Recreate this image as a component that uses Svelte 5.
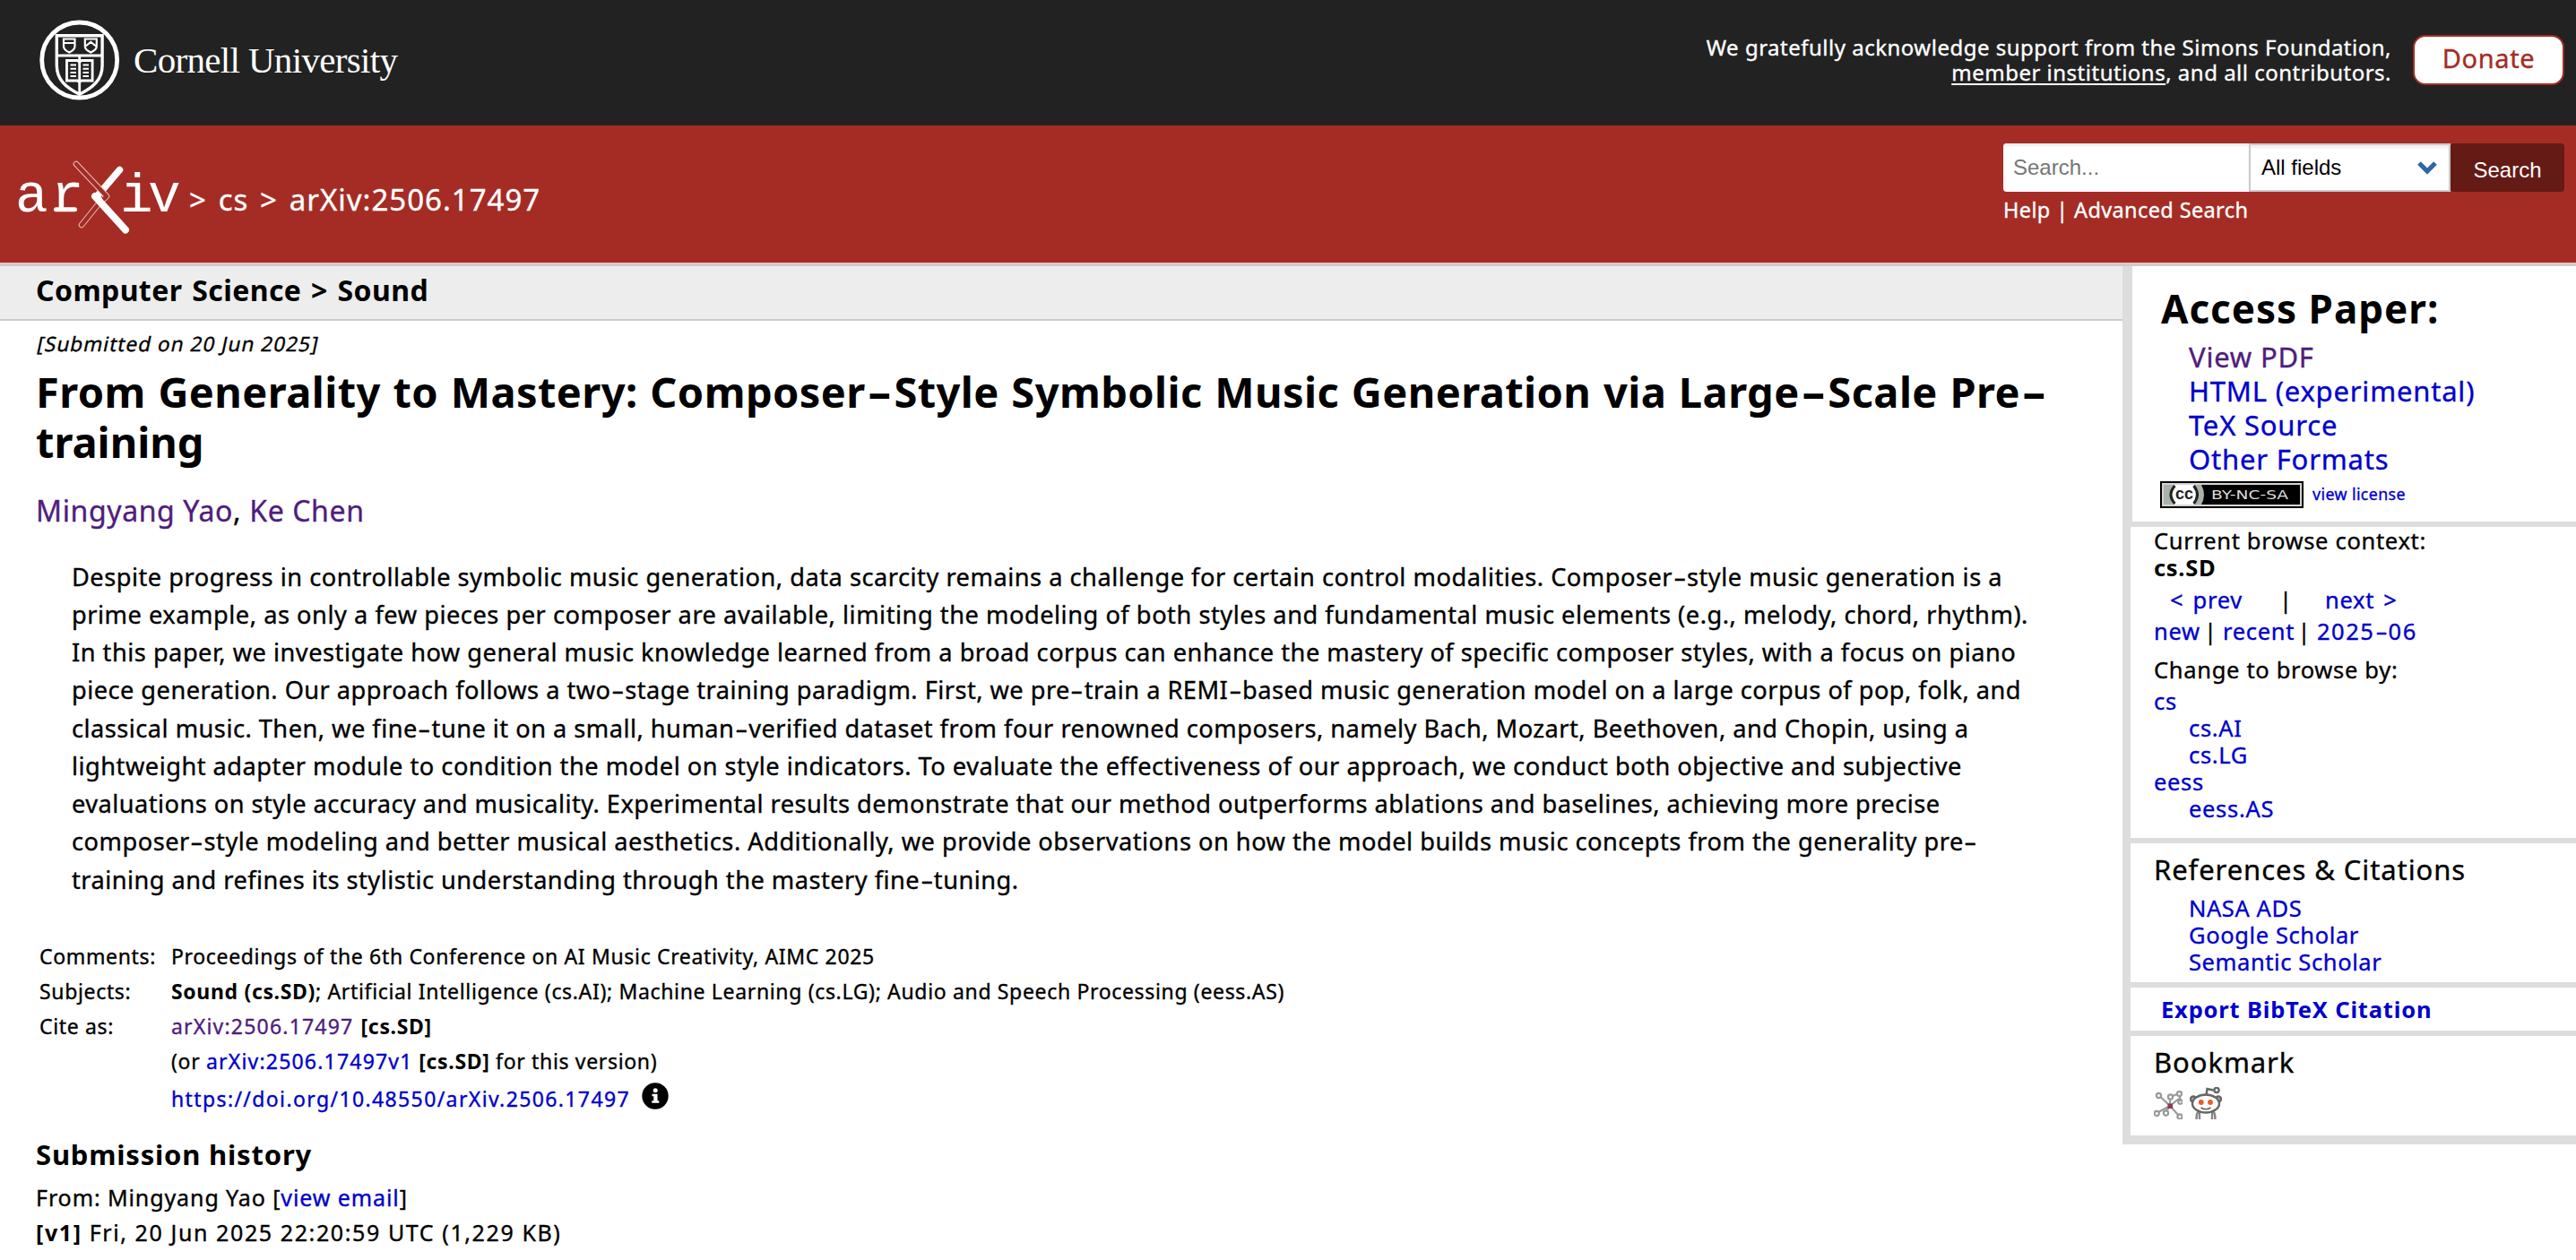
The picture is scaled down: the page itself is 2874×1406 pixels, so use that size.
<script>
  const abstractLines = [
    'Despite progress in controllable symbolic music generation, data scarcity remains a challenge for certain control modalities. Composer-style music generation is a',
    'prime example, as only a few pieces per composer are available, limiting the modeling of both styles and fundamental music elements (e.g., melody, chord, rhythm).',
    'In this paper, we investigate how general music knowledge learned from a broad corpus can enhance the mastery of specific composer styles, with a focus on piano',
    'piece generation. Our approach follows a two-stage training paradigm. First, we pre-train a REMI-based music generation model on a large corpus of pop, folk, and',
    'classical music. Then, we fine-tune it on a small, human-verified dataset from four renowned composers, namely Bach, Mozart, Beethoven, and Chopin, using a',
    'lightweight adapter module to condition the model on style indicators. To evaluate the effectiveness of our approach, we conduct both objective and subjective',
    'evaluations on style accuracy and musicality. Experimental results demonstrate that our method outperforms ablations and baselines, achieving more precise',
    'composer-style modeling and better musical aesthetics. Additionally, we provide observations on how the model builds music concepts from the generality pre-',
    'training and refines its stylistic understanding through the mastery fine-tuning.'
  ];
  const title = 'From Generality to Mastery: Composer-Style Symbolic Music Generation via Large-Scale Pre-';
  const formats = ['HTML (experimental)', 'TeX Source', 'Other Formats'];
  const references = ['NASA ADS', 'Google Scholar', 'Semantic Scholar'];
</script>

<!-- Sets hyphens wider than the font's own glyph -->
{#snippet wide(text)}{#each text.split('-') as part, i}{#if i > 0}<span class="hy">-</span>{/if}{part}{/each}{/snippet}

<div class="page">
  <header class="top">
    <svg class="cornell" width="440" height="100" viewBox="40 20 440 100" role="img" aria-label="Cornell University">
      <g fill="none" stroke="#fff">
        <circle cx="88.7" cy="67" r="42" stroke-width="4.8" />
        <path d="M63.3 39.8h50.8v33c0 16-10 25-25.4 32.4C73.3 97.8 63.3 88.8 63.3 72.8z" stroke-width="3.4" />
        <path d="M63 62h51.5M88.7 62v43" stroke-width="2.8" />
        <path d="M71 43.5h12.5v8c0 3.5-3 5.5-6.2 7-3.2-1.5-6.3-3.5-6.3-7zM71 48h12.5M94.8 43.5h13v8c0 3.5-3.2 5.5-6.5 7-3.3-1.5-6.5-3.5-6.5-7zM95.5 51.5l5.8-4.5 5.8 4.5" stroke-width="2.2" />
        <path d="M74.5 67.5h11.8l2.4 1.5 2.4-1.5h12v22.5h-12l-2.4 1.5-2.4-1.5h-11.8z" stroke-width="2.8" />
        <path d="M78.5 72.5h6.5M78.5 76.8h6.5M78.5 81h6.5M78.5 85h6.5M92.5 72.5h6.5M92.5 76.8h6.5M92.5 81h6.5M92.5 85h6.5" stroke-width="2" />
      </g>
      <text x="149" y="80.5" font-size="41" textLength="295" fill="#fff">Cornell University</text>
    </svg>
    <div class="support">
      <p class="ack">We gratefully acknowledge support from the Simons Foundation,<br /><u>member institutions</u>, and all contributors.</p>
      <button class="donate">Donate</button>
    </div>
  </header>

  <div class="banner">
    <svg class="arxiv" width="192" height="96" viewBox="10 172 192 96" role="img" aria-label="arXiv">
      <g fill="#fff">
        <text x="17" y="236" font-size="61">a</text>
        <text x="57" y="236" font-size="61">r</text>
        <text x="134" y="236" font-size="61">i</text>
        <text x="165" y="236" font-size="61">v</text>
      </g>
      <path d="M62.5 233.7h21" stroke="#fff" stroke-width="5" stroke-linecap="round" />
      <g fill="none" stroke-linecap="round" stroke-linejoin="round">
        <path d="M91 251L112 225" stroke="#e9c9c6" stroke-width="6.5" />
        <path d="M91 251L112 225" stroke="#a42c25" stroke-width="4.7" />
        <path d="M133.5 189.5L110 217" stroke="#fff" stroke-width="7.5" />
        <path d="M85 183L119 219l-3 3" stroke="#e9c9c6" stroke-width="6.5" />
        <path d="M85 183L119 219l-3 3" stroke="#a42c25" stroke-width="4.7" />
        <path d="M106 219L140 256.5" stroke="#fff" stroke-width="8" />
      </g>
    </svg>
    <div class="crumb">&gt; cs &gt; <span class="num">arXiv:2506.17497</span></div>
    <div class="search">
      <div class="fields">
        <div class="input">Search...</div>
        <div class="select">
          <span>All fields</span>
          <svg width="24" height="16" viewBox="0 0 24 16"><path d="M3 3l9 9 9-9" fill="none" stroke="#2f66a8" stroke-width="5.2" /></svg>
        </div>
        <div class="go">Search</div>
      </div>
      <div class="help">Help | Advanced Search</div>
    </div>
  </div>

  <div class="body">
    <main>
      <div class="subject">Computer Science &gt; Sound</div>
      <div class="content">
        <div class="dateline"><span>[Submitted on 20 Jun 2025]</span></div>
        <h1>{@render wide(title)}<br /><span class="tail">training</span></h1>
        <div class="authors"><a class="seen">Mingyang Yao</a>, <a class="seen">Ke Chen</a></div>
        <div class="abstract">
          {#each abstractLines as line}<div>{@render wide(line)}</div>{/each}
        </div>
        <div class="meta">
          <span>Comments:</span>
          <span>Proceedings of the 6th Conference on AI Music Creativity, AIMC 2025</span>
          <span>Subjects:</span>
          <span><b>Sound (cs.SD)</b>; Artificial Intelligence (cs.AI); Machine Learning (cs.LG); Audio and Speech Processing (eess.AS)</span>
          <span>Cite as:</span>
          <span class="id"><a class="seen num">arXiv:2506.17497</a> <b>[cs.SD]</b></span>
          <span></span>
          <span>(or <a class="num">arXiv:2506.17497v1</a> <b>[cs.SD]</b> for this version)</span>
          <span></span>
          <span class="doi">
            <a>https://doi.org/10.48550/arXiv.2506.17497</a>
            <svg width="30" height="30" viewBox="0 0 30 30"><circle cx="15" cy="15" r="14.7" /><circle cx="15.2" cy="8.8" r="2.5" fill="#fff" /><path d="M11.5 12.8h6v7.5h1.8v2.5h-8v-2.5h2v-5h-1.8z" fill="#fff" /></svg>
          </span>
        </div>
        <h2>Submission history</h2>
        <div class="history">
          <div>From: Mingyang Yao [<a>view email</a>]</div>
          <div class="version"><b>[v1]</b> Fri, 20 Jun 2025 22:20:59 UTC (1,229 KB)</div>
        </div>
      </div>
    </main>

    <aside>
      <section class="access">
        <h2>Access Paper:</h2>
        <ul>
          <li><a class="seen">View PDF</a></li>
          {#each formats as f}<li><a>{f}</a></li>{/each}
        </ul>
        <div class="license">
          <svg width="160" height="30" viewBox="0 0 160 30">
            <rect width="160" height="30" fill="#000" />
            <rect x="3" y="3" width="154" height="24" fill="#000" stroke="#d4d4d4" stroke-width="2" />
            <path d="M4 4h42q6 11 0 22H4z" fill="#aab2ab" />
            <path d="M16 4h22q8 11 0 22H16q-9-11 0-22z" fill="#fff" />
            <path d="M16.5 5q-9 10 0 20M37.5 5q8 10 0 20" fill="none" stroke="#222" stroke-width="3" />
            <text class="cc" x="17" y="20" font-size="18" textLength="20" fill="#222">cc</text>
            <text class="terms" x="57" y="20" font-size="13.5" textLength="86" lengthAdjust="spacingAndGlyphs" fill="#ddd">BY-NC-SA</text>
          </svg>
          <a>view license</a>
        </div>
      </section>
      <section class="browse">
        <div>Current browse context:</div>
        <div><b>cs.SD</b></div>
        <div class="step"><a>&lt; prev</a><span>|</span><a>next &gt;</a></div>
        <div class="lists"><a>new</a><span>|</span><a>recent</a><span>|</span><a class="num">{@render wide('2025-06')}</a></div>
        <div class="change">Change to browse by:</div>
        <div class="first"><a>cs</a></div>
        <div class="sub"><a>cs.AI</a></div>
        <div class="sub"><a>cs.LG</a></div>
        <div><a>eess</a></div>
        <div class="sub"><a>eess.AS</a></div>
      </section>
      <section class="refs">
        <h3>References &amp; Citations</h3>
        {#each references as r}<div class="sub"><a>{r}</a></div>{/each}
      </section>
      <section class="export"><a><b>Export BibTeX Citation</b></a></section>
      <section class="bookmark">
        <h3>Bookmark</h3>
        <div class="icons">
          <svg width="32" height="32" viewBox="0 0 32 32" fill="none" stroke="#9a9a9a" stroke-width="2.2">
            <path d="M8 7.5L18 17M18 17V9M18 17l10-8M18 17L5 24M18 17l-4 6M18 17l10 11M21 6l6-2.5M29 6v6" />
            <circle cx="5.5" cy="5.5" r="2.6" /><circle cx="18.5" cy="7" r="2.6" /><circle cx="28.5" cy="3.5" r="2.6" /><circle cx="29.5" cy="12.5" r="2.3" />
            <circle cx="3.2" cy="25.5" r="2.6" /><circle cx="13.5" cy="25" r="2.6" /><circle cx="29" cy="29" r="2.6" />
            <rect x="15.5" y="14.5" width="5.5" height="5.5" fill="#8c3a58" stroke="none" />
          </svg>
          <svg width="36" height="36" viewBox="0 0 36 36" fill="none" stroke="#666" stroke-width="2.4">
            <path d="M18.5 9l1-7 7 1.5" /><circle cx="30" cy="3.5" r="2.6" />
            <circle cx="4" cy="13.5" r="3" fill="#bbb" /><circle cx="32" cy="13.5" r="3" fill="#bbb" />
            <path d="M10 26c-2 3-2.5 6-2.5 10M26 26c2 3 2.5 6 2.5 10M11 28v8M25 28v8" stroke="#888" />
            <ellipse cx="18" cy="18.5" rx="15" ry="10" fill="#fff" />
            <circle cx="12.8" cy="17" r="2.9" fill="#f0592b" stroke="none" /><circle cx="23" cy="17" r="2.9" fill="#f0592b" stroke="none" />
            <path d="M12.5 23q5.5 3.5 11 0" stroke-width="1.6" />
          </svg>
        </div>
      </section>
    </aside>
  </div>
</div>

<style>
  :global(body) { background: #fff; overflow: hidden; }
  .page { width: 2874px; height: 1406px; overflow: hidden; background: #fff; color: #000; font-family: "Noto Sans", "Open Sans", sans-serif; -webkit-text-stroke: 0.35px currentColor; }
  .page svg, .fields { -webkit-text-stroke: 0; }
  h1, h2, h3, p, ul { margin: 0; padding: 0; }
  h1, h2, b, .subject { -webkit-text-stroke: 0; }
  ul { list-style: none; }
  section { box-sizing: border-box; }
  a { color: #0000cc; }
  a.seen { color: #4f1d7d; }
  .hy { display: inline-block; margin: 0 3.5px; letter-spacing: 0; transform: scaleX(1.6); }

  .top { height: 140px; background: #222; display: flex; justify-content: space-between; }
  .cornell { margin: 20px 0 0 40px; font-family: "Liberation Serif", serif; }
  .support { display: flex; align-items: flex-start; gap: 24px; padding: 39px 13px 0 0; }
  .ack { color: #fff; font-size: 24px; line-height: 28px; letter-spacing: 0.5px; text-align: right; }
  .ack u { text-decoration-thickness: 2px; text-underline-offset: 3px; }
  .donate { box-sizing: border-box; width: 169px; height: 56px; padding: 0 0 5px; border: 2px solid #a42c25; border-radius: 14px; background: #fff; color: #a42c25; font: 29px "Noto Sans", sans-serif; letter-spacing: 0.6px; }

  .banner { box-sizing: border-box; height: 157px; background: #a42c25; border-bottom: 2px solid #ccc; box-shadow: inset 0 -2px #e8c4c2; display: flex; align-items: flex-start; color: #fff; }
  .arxiv { margin: 32px 0 0 10px; font-family: "Liberation Mono", monospace; }
  .page .arxiv text { -webkit-text-stroke: 1.4px #fff; }
  .crumb { margin: 63px 0 0 9px; font-size: 33px; line-height: 40px; letter-spacing: 0.8px; word-spacing: 3.7px; white-space: nowrap; }
  .crumb .num { letter-spacing: 1px; }
  .search { margin: 20px 13px 0 auto; width: 626px; }
  .fields { display: flex; height: 54px; font: 24px/54px "Liberation Sans", sans-serif; }
  .input { box-sizing: border-box; width: 274px; padding-left: 11px; background: #fff; color: #757575; border-radius: 4px 0 0 4px; box-shadow: inset 0 3px 3px #eee; }
  .select { box-sizing: border-box; width: 225px; border: 2px solid #ccc; background: #fff; color: #000; display: flex; align-items: center; justify-content: space-between; padding: 0 12px; box-shadow: inset 0 3px 3px #eee; }
  .go { width: 127px; background: #641a15; color: #fff; text-align: center; line-height: 59px; border-radius: 4px; }
  .help { font-size: 23.5px; line-height: 40px; letter-spacing: 0.38px; }

  .body { display: flex; align-items: flex-start; }
  main { width: 2368px; }
  .subject { height: 59px; line-height: 54px; padding-left: 40px; background: #ededed; border-bottom: 2px solid #ccc; font-size: 32px; font-weight: 700; letter-spacing: 0.42px; word-spacing: 2px; }
  .content { padding-left: 40px; }
  .dateline { margin-top: 12px; font-size: 22.5px; line-height: 28px; letter-spacing: 1.05px; }
  .dateline span { display: inline-block; margin-left: 1.5px; transform: skewX(-12deg); }
  h1 { margin-top: 10.5px; font-size: 47px; line-height: 56px; letter-spacing: 0.42px; word-spacing: 1px; white-space: nowrap; }
  h1 .hy { margin: 0 8.3px; transform: scaleX(1.75); }
  h1 .tail { letter-spacing: 0; }
  .authors { margin-top: 29.5px; font-size: 32px; line-height: 40px; letter-spacing: 0.62px; }
  .abstract { margin: 32.5px 0 0 40px; font-size: 27.2px; line-height: 42.25px; letter-spacing: 0.54px; white-space: nowrap; }
  .abstract div:nth-child(1) { letter-spacing: 0.52px; }
  .abstract div:nth-child(3), .abstract div:nth-child(6), .abstract div:nth-child(8) { letter-spacing: 0.51px; }
  .abstract div:nth-child(4) { letter-spacing: 0.475px; }
  .abstract div:nth-child(5) { letter-spacing: 0.49px; }
  .abstract div:nth-child(7) { letter-spacing: 0.475px; }
  .abstract div:nth-child(9) { letter-spacing: 0.48px; }
  .meta { margin: 45px 0 0 4px; display: grid; grid-template-columns: 147px auto; grid-template-rows: repeat(4, 39px) 45px; font-size: 23px; line-height: 39px; letter-spacing: 0.66px; }
  .meta .num { letter-spacing: 1.2px; }
  .id { word-spacing: 1.5px; }
  .doi { display: flex; gap: 13px; line-height: 45px; letter-spacing: 1.38px; }
  .doi svg { margin-top: 4px; }
  .content h2 { margin-top: 21.5px; font-size: 31px; line-height: 36px; letter-spacing: 0.8px; }
  .history { margin-top: 10.5px; font-size: 25px; line-height: 39.3px; letter-spacing: 0.9px; }
  .version { letter-spacing: 1.6px; }

  aside { box-sizing: border-box; flex: 1; border-left: 9px solid #ddd; border-bottom: 10px solid #ddd; font-size: 25.5px; line-height: 30px; letter-spacing: 0.68px; }
  section { border-bottom: 6px solid #ddd; padding-left: 26px; }
  .access { height: 291px; border-left: 2px solid #ddd; padding: 22px 0 0 32px; }
  .access h2 { font-size: 44px; line-height: 50px; letter-spacing: 0.98px; }
  .access ul { margin: 9.5px 0 6.5px 31px; font-size: 31px; line-height: 38px; letter-spacing: 0.8px; }
  .license { display: flex; gap: 10px; height: 30px; font-size: 17.8px; line-height: 28px; letter-spacing: 0.4px; margin-left: -1px; }
  .cc { font-family: "Liberation Sans", sans-serif; font-weight: 700; letter-spacing: 0; }
  .terms { font-family: "DejaVu Sans", sans-serif; letter-spacing: 0; }
  .page .terms { -webkit-text-stroke: 0.5px #ddd; }
  .browse { height: 353px; }
  .step { display: grid; grid-template-columns: 122px 51px auto; padding-left: 18px; margin-top: 6px; word-spacing: 3px; }
  .lists { display: grid; grid-template-columns: 56px 21px 83.5px 21.5px auto; margin-top: 5px; }
  .lists .num { letter-spacing: 1.5px; }
  .change { margin-top: 13.4px; }
  .first { margin-top: 4.7px; }
  .sub { padding-left: 39px; }
  .refs { height: 161px; padding-top: 10.7px; }
  h3 { font-size: 31px; line-height: 36px; font-weight: 400; letter-spacing: 0.92px; }
  .refs h3 { margin-bottom: 10.4px; }
  .refs .sub { letter-spacing: 0.6px; }
  .export { height: 54px; padding: 9px 0 0 34px; letter-spacing: 0.82px; }
  .bookmark { height: 111px; border-bottom: 0; padding-top: 11px; }
  .icons { display: flex; align-items: flex-end; gap: 8px; margin-top: 10px; }
</style>
